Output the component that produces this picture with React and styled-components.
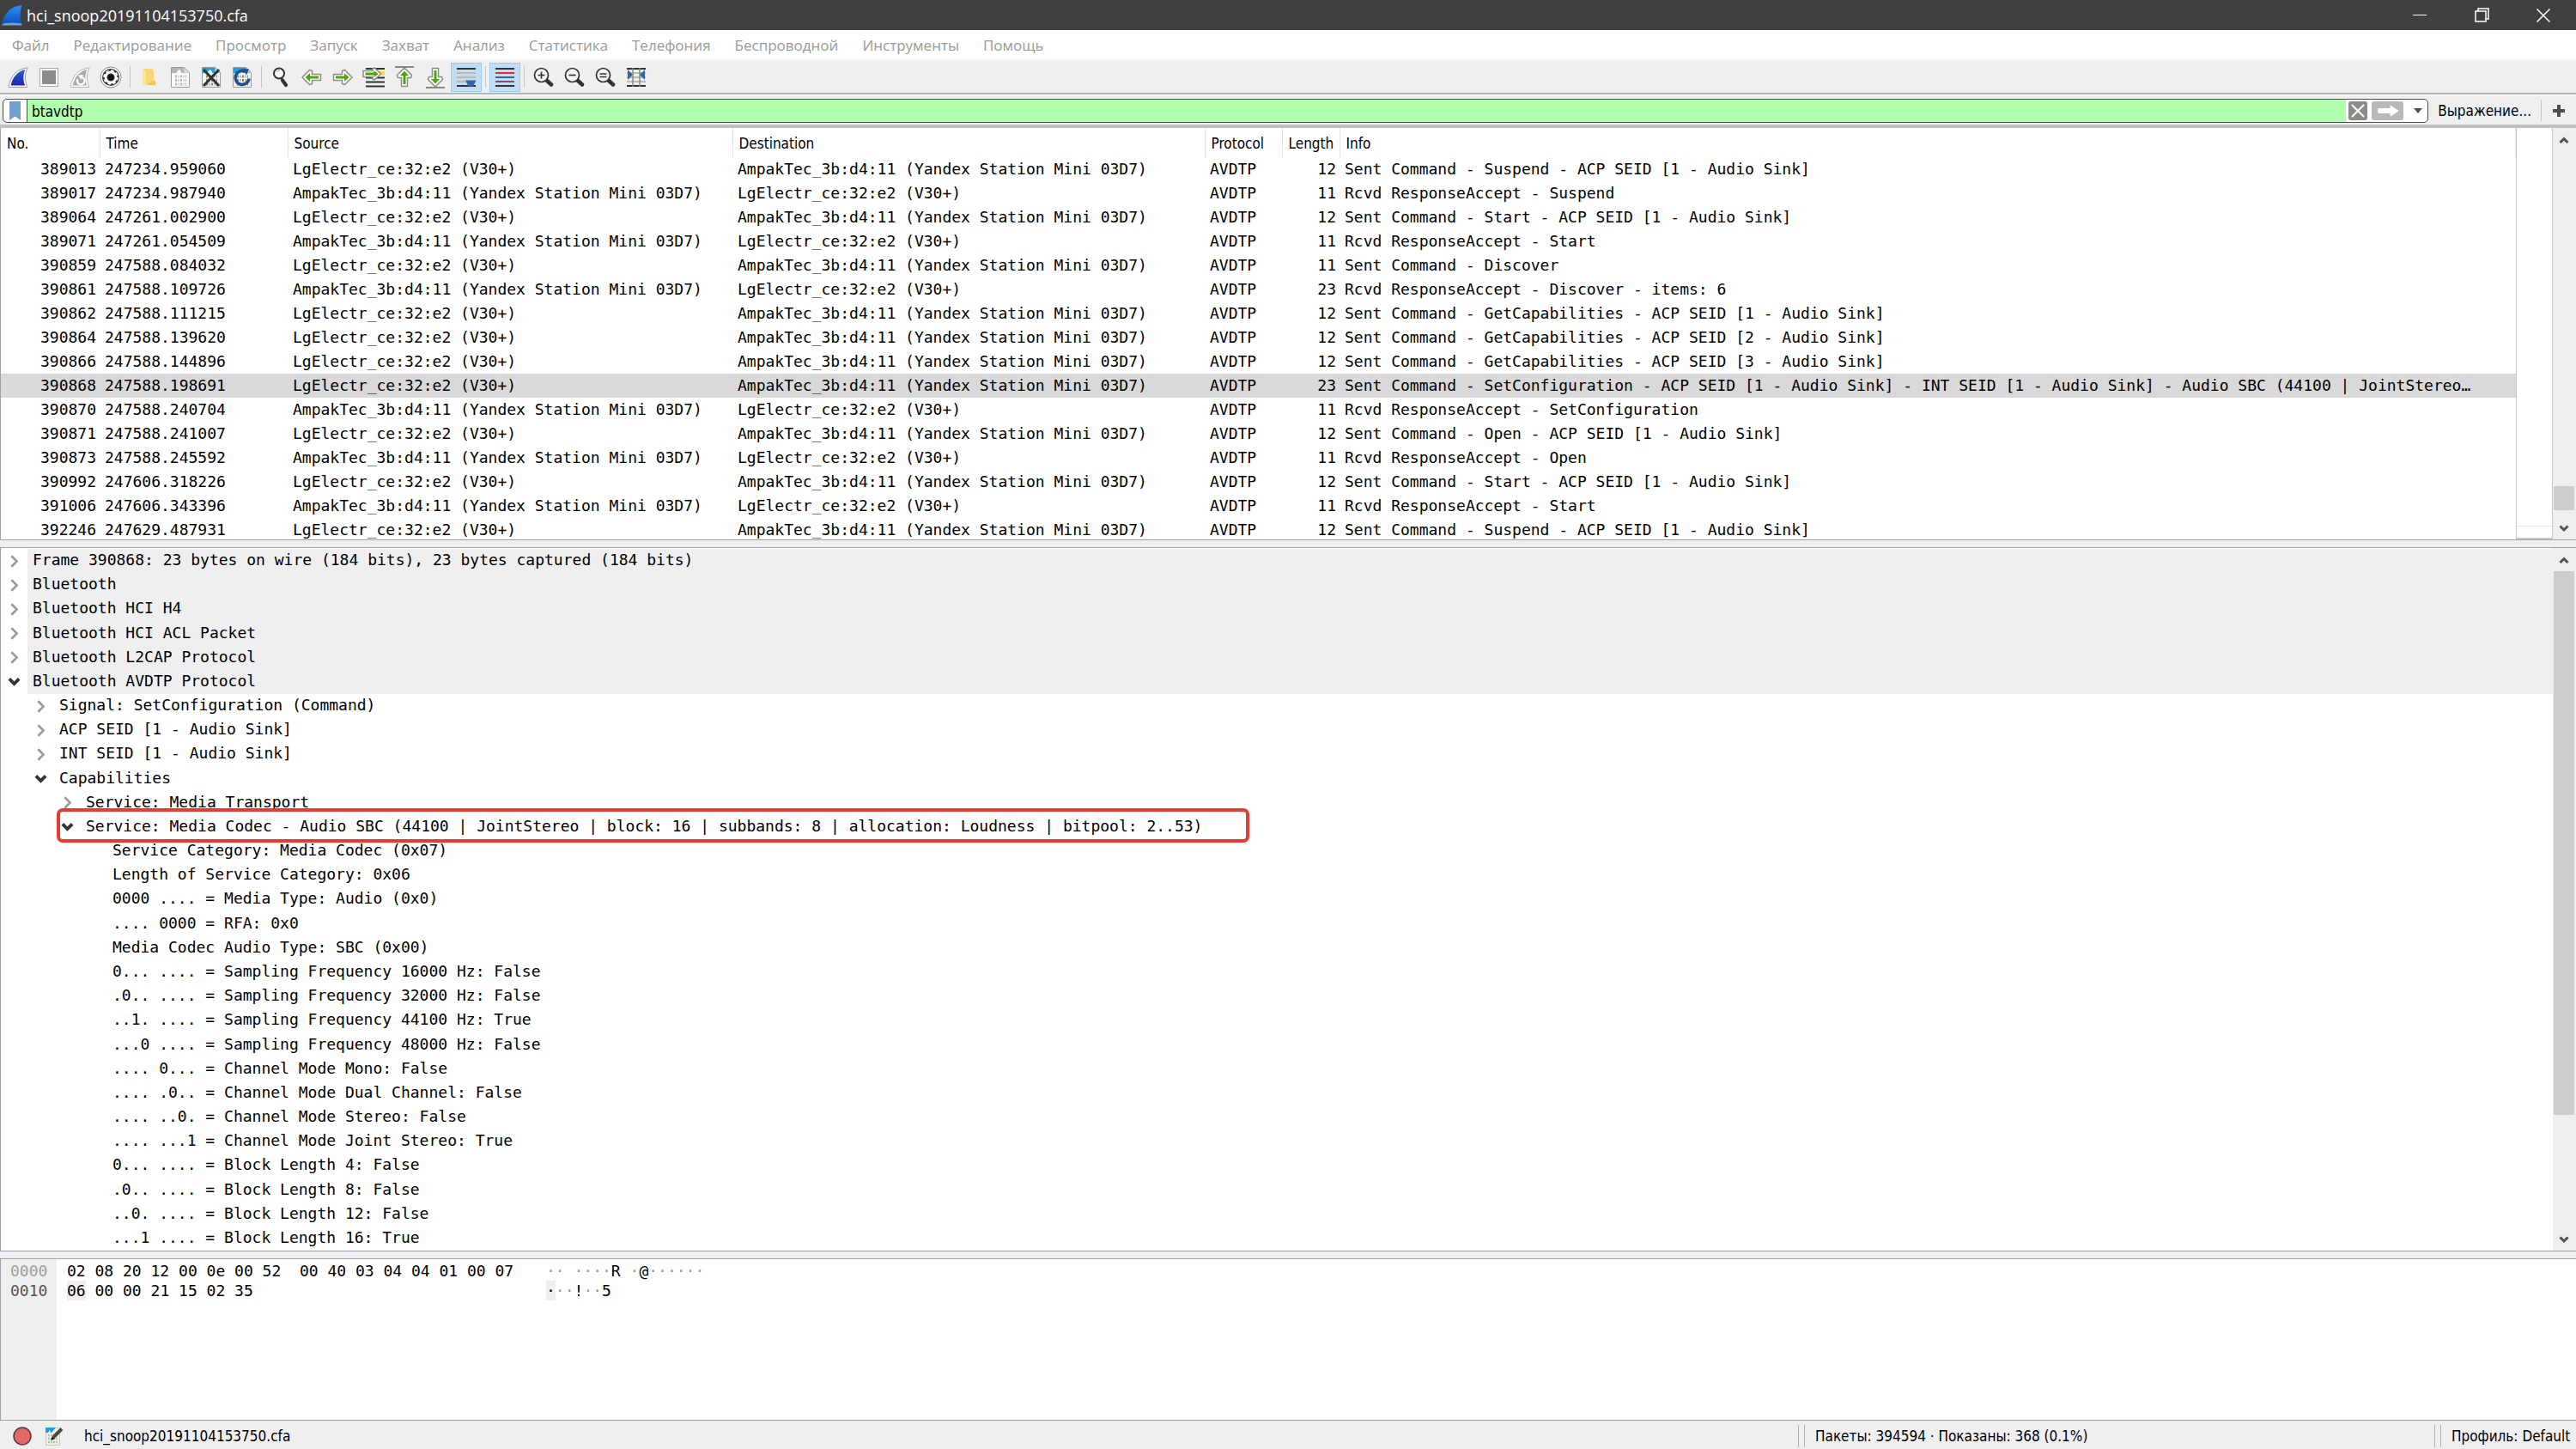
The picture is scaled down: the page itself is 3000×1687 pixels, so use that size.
import React from 'react'
import styled, { createGlobalStyle } from 'styled-components';

const Global = createGlobalStyle`
*{
  box-sizing: border-box;
}
body{
  margin: 0;
  background-color: #efefef;
  color: #000;
  font-family: "DejaVu Sans Condensed", "Open Sans", sans-serif;
  font-size: 17px;
}
button, input{
  font: inherit;
  color: inherit;
  border: 0;
  padding: 0;
  background: none;
}
`;
const mono = `"DejaVu Sans Mono", "Liberation Mono", monospace`;
const menuFont = `"Open Sans", "Noto Sans", sans-serif`;

const Window = styled.div`
display: flex;
flex-direction: column;
height: 100vh;
min-height: 1100px;
overflow: hidden;
`;
const TitleBar = styled.header`
display: flex;
align-items: center;
height: 35px;
flex: none;
padding: 0 2px;
background-color: #404040;
color: #fff;
`;
const TitleText = styled.h1`
flex: 1;
margin: 0 0 0 5px;
font-family: ${menuFont};
font-size: 18px;
font-weight: 400;
`;
const WindowButton = styled.button`
display: grid;
place-items: center;
width: 72px;
height: 35px;
`;
const MenuBar = styled.nav`
display: flex;
align-items: center;
height: 34px;
flex: none;
background-color: #fff;
`;
const MenuItem = styled.button`
padding: 0 14px;
height: 34px;
color: #999;
font-family: ${menuFont};
font-size: 17px;
`;
const ToolBar = styled.div`
display: flex;
align-items: center;
height: 41px;
flex: none;
padding-left: 3px;
border-top: 2px solid #f7f7f7;
border-bottom: 2px solid #b4b4b4;
`;
const ToolButton = styled.button`
display: grid;
place-items: center;
width: 36px;
height: 34px;
border: 1px solid ${props => props.$on ? "#99cdf2" : "transparent"};
background-color: ${props => props.$on ? "#c2dcf2" : "transparent"};
`;
const ToolLine = styled.span`
width: 1px;
height: 25px;
margin: 0 4px;
background-color: #c6c6c6;
`;
const FilterBar = styled.form`
display: flex;
align-items: center;
height: 39px;
flex: none;
padding: 1px 8px 0 3px;
border-top: 1px solid #fff;
border-bottom: 4px solid #c0c0c0;
`;
const FilterBox = styled.div`
display: flex;
align-items: center;
flex: 1;
height: 28px;
border: 1px solid #4d4d4d;
border-radius: 5px;
background-color: #fff;
overflow: hidden;
`;
const BookmarkButton = styled.button`
display: grid;
place-items: center;
width: 28px;
height: 26px;
border-right: 1px solid #4d4d4d;
`;
const FilterInput = styled.input`
flex: 1;
height: 26px;
padding: 2px 5px 0;
background-color: #afffaf;
outline: 0;
`;
const FilterButton = styled.button`
display: grid;
place-items: center;
width: ${props => props.$wide ? "37px" : "22px"};
height: 22px;
margin-left: ${props => props.$wide ? "5px" : "3px"};
border-radius: 3px;
background-color: ${props => props.$wide ? "#b9b9b9" : "#8a8c86"};
`;
const CaretButton = styled.button`
display: grid;
place-items: center;
width: 28px;
height: 26px;
padding-left: 6px;
`;
const ExpressionButton = styled.button`
margin-left: 11px;
padding-right: 7px;
height: 26px;
`;
const PlusButton = styled.button`
display: grid;
place-items: center;
width: 24px;
height: 26px;
margin-left: 4px;
`;
const Pane = styled.section`
display: flex;
flex: ${props => props.$height ? `none` : "1"};
height: ${props => props.$height || "auto"};
min-height: 0;
border: 1px solid #a0a0a8;
border-right: 0;
border-top-width: ${props => props.$first ? "0" : "1px"};
background-color: #fff;
`;
const Splitter = styled.div`
height: 8px;
flex: none;
`;
const PacketArea = styled.div`
flex: 1;
min-width: 0;
overflow: hidden;
`;
const PacketTable = styled.table`
width: 100%;
table-layout: fixed;
border-collapse: collapse;
`;
const HeadCell = styled.th`
height: 34px;
padding: 2px 7px 0;
border-right: 1px solid #e4e4e4;
text-align: left;
font-weight: 400;
`;
const Row = styled.tr`
height: 28px;
background-color: ${props => props.$selected ? "#d9d9d9" : "#fff"};
`;
const Cell = styled.td`
height: 28px;
padding: 0 4px 0 6px;
font-family: ${mono};
font-size: 18px;
line-height: 26px;
white-space: pre;
overflow: hidden;
text-overflow: ellipsis;
text-align: ${props => props.$right ? "right" : "left"};
`;
const MiniMap = styled.div`
width: 43px;
border: solid #c8c8c8;
border-width: 0 1px 2px;
padding-bottom: 13px;
`;
const MiniMapMark = styled.div`
height: 100%;
border-bottom: 1px solid #e6e6e6;
`;
const ScrollBar = styled.div`
display: flex;
flex-direction: column;
width: 27px;
padding: 0 2px 0 1px;
background-color: #efefef;
`;
const ScrollButton = styled.button`
display: grid;
place-items: center;
height: 27px;
flex: none;
`;
const ScrollSpace = styled.div`
flex: ${props => props.$size} 0 0;
`;
const Thumb = styled.div`
flex: ${props => props.$size} 0 0;
background-color: #cdcdcd;
`;
const Tree = styled.ul`
display: grid;
grid-auto-rows: 1fr;
flex: 1;
min-width: 0;
margin: 0;
padding: 1px 0 0;
list-style: none;
font-family: ${mono};
font-size: 18px;
overflow: hidden;
`;
const TreeItem = styled.li`
display: flex;
position: relative;
min-height: 0;
padding-left: ${props => props.$level * 31}px;
`;
const Toggle = styled.button`
display: grid;
place-items: center;
width: 31px;
`;
const TreeLabel = styled.span`
display: flex;
align-items: center;
flex: 1;
padding: 0 0 2px 6px;
margin-left: ${props => props.$leaf ? "31px" : "0"};
background-color: ${props => props.$shaded ? "#efefef" : "transparent"};
line-height: 24px;
white-space: pre;
`;
const Highlight = styled.span`
position: absolute;
left: 65px;
top: -8px;
bottom: -4px;
width: 1389px;
border: 4px solid #e63a32;
border-radius: 7px;
pointer-events: none;
`;
const Bytes = styled.div`
display: grid;
grid-template-columns: 65px 570px 1fr;
flex: 1;
font-family: ${mono};
font-size: 18px;
line-height: 23px;
`;
const ByteColumn = styled.div`
padding: 2px 0 0 ${props => props.$pad || "0"};
background-color: ${props => props.$offset ? "#efefef" : "#fff"};
`;
const ByteLine = styled.div`
height: 23px;
color: ${props => props.$color || "#000"};
white-space: pre;
`;
const Mark = styled.span`
display: inline-block;
height: 23px;
background-color: #efefef;
`;
const Dots = styled.span`
color: #999;
`;
const StatusBar = styled.footer`
display: flex;
align-items: center;
height: 33px;
flex: none;
padding: 2px 0 0 12px;
`;
const StatusButton = styled.button`
display: grid;
place-items: center;
width: 28px;
height: 28px;
margin-right: 9px;
`;
const StatusText = styled.span`
flex: ${props => props.$width ? "none" : "1"};
width: ${props => props.$width || "auto"};
padding-left: 12px;
white-space: nowrap;
`;
const Grip = styled.span`
width: 8px;
height: 26px;
border: solid #b0b0b0;
border-width: 0 1px;
`;

const dark = "#2e3436";

const Fin = ({ size = 24, top, bottom, rim }) => (
  <svg width={size} height={size} viewBox="0 0 24 24">
    <defs>
      <linearGradient id={"fin" + top.slice(1)} x1="0" y1="0" x2="0" y2="1">
        <stop offset="0" stopColor={top} />
        <stop offset="1" stopColor={bottom} />
      </linearGradient>
    </defs>
    {rim && <path d="M1 23.5C3 10 11 2 23.2.8 19.5 8 19.5 16 23 23.5z" fill="#fff" stroke="#9a9a9a" />}
    <path d={rim ? "M3.6 21.5C5.5 11.500 12 4.500 20.300 2.900 17.800 9 17.800 16 20.200 21.500z" : "M0 22.500C3 9 11 1 23.500 0 21 8 21 16 23.500 22.500 15 20.500 8 21 0 22.500z"} fill={`url(#fin${top.slice(1)})`} />
    {!rim && <path d="M0 23.500Q1.500 20.500 5 21 12 20 23.300 21.500L23.500 23.500z" fill="#7f9fd0" />}
  </svg>
)

const Page = ({ head = "#1f9fe0", body = "#f4f3ea", text = "#8c8c80", children }) => (
  <svg width="24" height="26" viewBox="0 0 24 26">
    <path d="M1.500 1.500h15l6 6v17h-21z" fill={body} stroke="#999" />
    <path d="M2 2h14.500l5 5v1H13c0-2-1-3-2-4-2 1-3 2.500-3.500 4H2z" fill={head} />
    <path d="M16.500 2v5.500h5.500z" fill="#ddd" />
    <g stroke={text} strokeWidth="3" strokeDasharray="2 1.500 1 1.500">
      <path d="M6 12h13M6 16.500h13M6 21h13" />
    </g>
    {children}
  </svg>
)

const Arrow = ({ turn = 0, children }) => (
  <svg width="26" height="26" viewBox="0 0 26 26">
    <g transform={`rotate(${turn} 13 13)`}>
      <path d="M2.500 9.500h10v-4l3-1 8.500 8.500-8.500 8.500-3-1v-4h-10z" fill="#fff" stroke="#8a8c86" strokeWidth="1.500" strokeLinejoin="round" />
      <path d="M5 11.500h10v-3.500l5.500 5-5.500 5v-3.500H5z" fill="#4ea60c" />
    </g>
    {children}
  </svg>
)

const Lens = ({ children }) => (
  <svg width="24" height="24" viewBox="0 0 24 24">
    <path d="M15 15l6 5.500" stroke={dark} strokeWidth="4.500" strokeLinecap="round" />
    <circle cx="9.500" cy="9.500" r="8" fill="#f4f4f4" stroke={dark} strokeWidth="1.700" />
    <g stroke={dark} strokeWidth="1.700">{children}</g>
  </svg>
)

const Lines = ({ colors, children }) => (
  <svg width="24" height="24" viewBox="0 0 24 24">
    {colors.map((c, i) => <path key={i} d={`M1 ${2 + i * 5}h22`} stroke={c} strokeWidth="2" />)}
    {children}
  </svg>
)

const Chevron = ({ d, color = "#505050", width = 3, size = 12 }) => (
  <svg width={size} height={size} viewBox="0 0 12 12">
    <path d={d} fill="none" stroke={color} strokeWidth={width} />
  </svg>
)
const up = "M1.500 9L6 4.500 10.500 9";
const down = "M1.500 3.500L6 8 10.500 3.500";
const right = "M3.500 1L8.500 6 3.500 11";

const tools = [
  { label: "Начать захват", icon: <Fin top="#2a5fd8" bottom="#2222a8" rim /> },
  { label: "Остановить захват", icon: <svg width="22" height="22" viewBox="0 0 22 22"><rect x=".5" y=".5" width="21" height="21" fill="#fff" stroke="#aaa" /><rect x="3" y="3" width="16" height="16" fill="#8b8b8b" /></svg> },
  {
    label: "Перезапустить захват", icon: <svg width="24" height="24" viewBox="0 0 24 24">
      <path d="M1 23.500C3 10 11 2 23.200.8 19.500 8 19.500 16 23 23.500z" fill="#fff" stroke="#b4b4b4" />
      <path d="M3.600 21.500C5.500 11.500 12 4.500 20.300 2.900 17.800 9 17.800 16 20.200 21.500z" fill="#aaa" />
      <path d="M9.500 14a4.300 4.300 0 1 0 5-2" fill="none" stroke="#fff" strokeWidth="2.200" /><path d="M10 9.500l6-.5-2.500 6z" fill="#fff" />
    </svg>
  },
  {
    label: "Параметры захвата", icon: <svg width="26" height="26" viewBox="0 0 26 26">
      <circle cx="13" cy="13" r="12" fill="#fff" stroke="#8a8c86" /><circle cx="13" cy="13" r="10" fill={dark} />
      <circle cx="13" cy="13" r="6" fill="none" stroke="#fff" strokeWidth="3" />
      <circle cx="13" cy="13" r="7.500" fill="none" stroke="#fff" strokeWidth="2.500" strokeDasharray="3.300 2.590" /><circle cx="13" cy="13" r="3.500" fill="#111" />
    </svg>
  },
  null,
  { label: "Открыть", icon: <svg width="18" height="22" viewBox="0 0 18 22"><path d="M2 1h10l2 2v12l2 4H3z" fill="#f7d774" /><path d="M1 1l4 2.500V21L1 18.500z" fill="#fbe49b" /><path d="M5 20h11v-5h-2z" fill="#efc55c" /></svg> },
  { label: "Сохранить", icon: <Page head="#b5b5b5" body="#fafafa" text="#b8b8b8" /> },
  { label: "Закрыть", icon: <Page><path d="M3 4l18 19M21 4L3 23" stroke={dark} strokeWidth="3" /></Page> },
  { label: "Обновить", icon: <Page><path d="M15.500 6.200A8 8 0 1 0 20 14.500" fill="none" stroke="#204f94" strokeWidth="3.600" /><path d="M13 3l7 .5-3 7z" fill="#204f94" /></Page> },
  null,
  { label: "Найти", icon: <svg width="20" height="24" viewBox="0 0 20 24"><circle cx="8" cy="7.500" r="6" fill="#fafafa" stroke={dark} strokeWidth="2" /><path d="M10.500 13.500l2 1.500" stroke={dark} strokeWidth="2" /><path d="M12 15.500l4 5.500" stroke={dark} strokeWidth="4.200" strokeLinecap="round" /><path d="M5 6q1-2.500 4-2" fill="none" stroke="#999" /></svg> },
  { label: "Назад", icon: <Arrow turn={180} /> },
  { label: "Вперёд", icon: <Arrow /> },
  {
    label: "К пакету", icon: <svg width="26" height="24" viewBox="0 0 26 24">
      <path d="M4 2h22M4 12.500h22M4 17.500h22M4 22.500h22" stroke={dark} strokeWidth="2" /><path d="M17 7h9" stroke="#ffd83a" strokeWidth="5" />
      <path d="M1 4.500h11V2l2-1 7.500 7-7.500 7-2-1v-2.500H1z" fill="#fff" stroke="#8a8c86" strokeWidth="1.500" /><path d="M3.500 6.500h10V4l5 4-5 4V9.500h-10z" fill="#4ea60c" />
    </svg>
  },
  { label: "К первому", icon: <Arrow turn={-90}><path d="M2 1h22" stroke="#666" strokeWidth="1.500" /></Arrow> },
  { label: "К последнему", icon: <Arrow turn={90}><path d="M2 25h22" stroke="#666" strokeWidth="1.500" /></Arrow> },
  { label: "Автопрокрутка", on: true, icon: <Lines colors={[dark, "#babab0", "#babab0", "#babab0", dark]}><path d="M11 15.500h12.500l-3.500 7h-5.500z" fill="#3465a4" /></Lines> },
  null,
  { label: "Раскрасить", on: true, icon: <Lines colors={[dark, "#ef2929", "#3465a4", "#75507b", dark]} /> },
  null,
  { label: "Увеличить", icon: <Lens><path d="M9.500 5.500v8M5.500 9.500h8" /></Lens> },
  { label: "Уменьшить", icon: <Lens><path d="M5.500 9.500h8" /></Lens> },
  { label: "Обычный размер", icon: <Lens><path d="M5.500 8h8M5.500 11.500h8" /></Lens> },
  { label: "Подогнать столбцы", icon: <Lines colors={[dark, "#babab0", "#babab0", "#babab0", dark]}><path d="M8 1v22M16 1v22" stroke="#888a85" strokeWidth="1.500" /><path d="M2 3l6 6-6 6zM22 3l-6 6 6 6z" fill="#3465a4" /></Lines> },
];

const menus = ["Файл", "Редактирование", "Просмотр", "Запуск", "Захват", "Анализ", "Статистика", "Телефония", "Беспроводной", "Инструменты", "Помощь"];

const columns = [["No.", 115], ["Time", 219], ["Source", 518], ["Destination", 550], ["Protocol", 90], ["Length", 67], ["Info"]];
const lg = "LgElectr_ce:32:e2 (V30+)";
const yandex = "AmpakTec_3b:d4:11 (Yandex Station Mini 03D7)";
const packets = [
  ["389013", "247234.959060", 12, "Sent Command - Suspend - ACP SEID [1 - Audio Sink]"],
  ["389017", "247234.987940", 11, "Rcvd ResponseAccept - Suspend"],
  ["389064", "247261.002900", 12, "Sent Command - Start - ACP SEID [1 - Audio Sink]"],
  ["389071", "247261.054509", 11, "Rcvd ResponseAccept - Start"],
  ["390859", "247588.084032", 11, "Sent Command - Discover"],
  ["390861", "247588.109726", 23, "Rcvd ResponseAccept - Discover - items: 6"],
  ["390862", "247588.111215", 12, "Sent Command - GetCapabilities - ACP SEID [1 - Audio Sink]"],
  ["390864", "247588.139620", 12, "Sent Command - GetCapabilities - ACP SEID [2 - Audio Sink]"],
  ["390866", "247588.144896", 12, "Sent Command - GetCapabilities - ACP SEID [3 - Audio Sink]"],
  ["390868", "247588.198691", 23, "Sent Command - SetConfiguration - ACP SEID [1 - Audio Sink] - INT SEID [1 - Audio Sink] - Audio SBC (44100 | JointStereo…"],
  ["390870", "247588.240704", 11, "Rcvd ResponseAccept - SetConfiguration"],
  ["390871", "247588.241007", 12, "Sent Command - Open - ACP SEID [1 - Audio Sink]"],
  ["390873", "247588.245592", 11, "Rcvd ResponseAccept - Open"],
  ["390992", "247606.318226", 12, "Sent Command - Start - ACP SEID [1 - Audio Sink]"],
  ["391006", "247606.343396", 11, "Rcvd ResponseAccept - Start"],
  ["392246", "247629.487931", 12, "Sent Command - Suspend - ACP SEID [1 - Audio Sink]"],
];

// level, state (closed / open / leaf), text
const details = [
  [0, "closed", "Frame 390868: 23 bytes on wire (184 bits), 23 bytes captured (184 bits)"],
  [0, "closed", "Bluetooth"],
  [0, "closed", "Bluetooth HCI H4"],
  [0, "closed", "Bluetooth HCI ACL Packet"],
  [0, "closed", "Bluetooth L2CAP Protocol"],
  [0, "open", "Bluetooth AVDTP Protocol"],
  [1, "closed", "Signal: SetConfiguration (Command)"],
  [1, "closed", "ACP SEID [1 - Audio Sink]"],
  [1, "closed", "INT SEID [1 - Audio Sink]"],
  [1, "open", "Capabilities"],
  [2, "closed", "Service: Media Transport"],
  [2, "open", "Service: Media Codec - Audio SBC (44100 | JointStereo | block: 16 | subbands: 8 | allocation: Loudness | bitpool: 2..53)", true],
  [3, "leaf", "Service Category: Media Codec (0x07)"],
  [3, "leaf", "Length of Service Category: 0x06"],
  [3, "leaf", "0000 .... = Media Type: Audio (0x0)"],
  [3, "leaf", ".... 0000 = RFA: 0x0"],
  [3, "leaf", "Media Codec Audio Type: SBC (0x00)"],
  [3, "leaf", "0... .... = Sampling Frequency 16000 Hz: False"],
  [3, "leaf", ".0.. .... = Sampling Frequency 32000 Hz: False"],
  [3, "leaf", "..1. .... = Sampling Frequency 44100 Hz: True"],
  [3, "leaf", "...0 .... = Sampling Frequency 48000 Hz: False"],
  [3, "leaf", ".... 0... = Channel Mode Mono: False"],
  [3, "leaf", ".... .0.. = Channel Mode Dual Channel: False"],
  [3, "leaf", ".... ..0. = Channel Mode Stereo: False"],
  [3, "leaf", ".... ...1 = Channel Mode Joint Stereo: True"],
  [3, "leaf", "0... .... = Block Length 4: False"],
  [3, "leaf", ".0.. .... = Block Length 8: False"],
  [3, "leaf", "..0. .... = Block Length 12: False"],
  [3, "leaf", "...1 .... = Block Length 16: True"],
];

const Scroller = ({ before, thumb, after }) => (
  <ScrollBar>
    <ScrollButton aria-label="Вверх"><Chevron d={up} /></ScrollButton>
    <ScrollSpace $size={before} />
    <Thumb $size={thumb} />
    <ScrollSpace $size={after} />
    <ScrollButton aria-label="Вниз"><Chevron d={down} /></ScrollButton>
  </ScrollBar>
)

const App = () => {
  return (
    <>
      <Global />
      <Window>
        <TitleBar>
          <Fin top="#2f8fee" bottom="#0a4fc0" />
          <TitleText>hci_snoop20191104153750.cfa</TitleText>
          <WindowButton aria-label="Свернуть"><svg width="16" height="16"><path d="M0 7.500h16" stroke="#fff" strokeWidth="1" /></svg></WindowButton>
          <WindowButton aria-label="Восстановить"><svg width="17" height="17" fill="none" stroke="#fff" strokeWidth="1.500"><path d="M1 4h12v12H1zM4 4V1h12v12h-3" /></svg></WindowButton>
          <WindowButton aria-label="Закрыть окно"><svg width="16" height="16"><path d="M.5.5l15 15M15.500.5l-15 15" stroke="#fff" strokeWidth="1.500" /></svg></WindowButton>
        </TitleBar>
        <MenuBar>
          {menus.map(m => <MenuItem key={m}>{m}</MenuItem>)}
        </MenuBar>
        <ToolBar>
          {tools.map((t, i) => t
            ? <ToolButton key={i} $on={t.on} aria-label={t.label}>{t.icon}</ToolButton>
            : <ToolLine key={i} />)}
        </ToolBar>
        <FilterBar onSubmit={e => e.preventDefault()}>
          <FilterBox>
            <BookmarkButton type="button" aria-label="Закладки"><svg width="13" height="22"><path d="M0 0h13v22l-6.500-4.500L0 22z" fill="#729fcf" /></svg></BookmarkButton>
            <FilterInput aria-label="Фильтр отображения" defaultValue="btavdtp" />
            <FilterButton type="button" aria-label="Очистить"><svg width="16" height="16"><path d="M1.500 1.500l13 13M14.500 1.500l-13 13" stroke="#fff" strokeWidth="2" strokeLinecap="round" /></svg></FilterButton>
            <FilterButton $wide aria-label="Применить"><svg width="26" height="14"><path d="M2 4.500h14V1l9 6-9 6V9.500H2q-1-2.500 0-5z" fill="#fff" stroke="#fff" strokeLinejoin="round" /></svg></FilterButton>
            <CaretButton type="button" aria-label="История"><svg width="10" height="6"><path d="M0 0h10L5 6z" fill="#505050" /></svg></CaretButton>
          </FilterBox>
          <ExpressionButton type="button">Выражение...</ExpressionButton>
          <ToolLine />
          <PlusButton type="button" aria-label="Добавить"><svg width="14" height="14"><path d="M7 0v14M0 7h14" stroke="#4d4d4d" strokeWidth="4" /></svg></PlusButton>
        </FilterBar>
        <Pane $first $height="480px">
          <PacketArea>
            <PacketTable>
              <colgroup>
                {columns.map(([name, width]) => <col key={name} width={width} />)}
              </colgroup>
              <thead>
                <tr>{columns.map(([name]) => <HeadCell key={name}>{name}</HeadCell>)}</tr>
              </thead>
              <tbody>
                {packets.map(([no, time, length, info]) => {
                  const fromPhone = info.startsWith("Sent");
                  return (
                    <Row key={no} $selected={no === "390868"}>
                      <Cell $right>{no}</Cell>
                      <Cell>{time}</Cell>
                      <Cell>{fromPhone ? lg : yandex}</Cell>
                      <Cell>{fromPhone ? yandex : lg}</Cell>
                      <Cell>AVDTP</Cell>
                      <Cell $right>{length}</Cell>
                      <Cell>{info}</Cell>
                    </Row>
                  )
                })}
              </tbody>
            </PacketTable>
          </PacketArea>
          <MiniMap><MiniMapMark /></MiniMap>
          <Scroller before={390} thumb={28} after={7} />
        </Pane>
        <Splitter />
        <Pane>
          <Tree>
            {details.map(([level, state, text, boxed]) => (
              <TreeItem key={text} $level={level}>
                {state !== "leaf" && (
                  <Toggle aria-label={text} aria-expanded={state === "open"}>
                    {state === "open" ? <Chevron d={down} color="#333" size={15} /> : <Chevron d={right} color="#999" width={2} size={15} />}
                  </Toggle>
                )}
                <TreeLabel $shaded={level === 0} $leaf={state === "leaf"}>{text}</TreeLabel>
                {boxed && <Highlight />}
              </TreeItem>
            ))}
          </Tree>
          <Scroller before={0} thumb={633} after={131} />
        </Pane>
        <Splitter />
        <Pane $height="189px">
          <Bytes>
            <ByteColumn $offset $pad="11px">
              <ByteLine $color="#a0a0a0">0000</ByteLine>
              <ByteLine $color="#555">0010</ByteLine>
            </ByteColumn>
            <ByteColumn $pad="12px">
              <ByteLine>02 08 20 12 00 0e 00 52  00 40 03 04 04 01 00 07</ByteLine>
              <ByteLine><Mark>06</Mark> 00 00 21 15 02 35</ByteLine>
            </ByteColumn>
            <ByteColumn>
              <ByteLine><Dots>·· ····</Dots>R <Dots>·</Dots>@<Dots>······</Dots></ByteLine>
              <ByteLine><Mark>·</Mark><Dots>··</Dots>!<Dots>··</Dots>5</ByteLine>
            </ByteColumn>
          </Bytes>
        </Pane>
        <StatusBar>
          <StatusButton aria-label="Экспертная информация"><svg width="22" height="22"><circle cx="11" cy="11" r="10" fill="#e46a6a" stroke="#5a3a3a" strokeWidth="1.500" /></svg></StatusButton>
          <StatusButton aria-label="Комментарий к файлу">
            <svg width="24" height="24" viewBox="0 0 24 24">
              <path d="M2.500 2.500h16v20h-16z" fill="#f1f0e6" stroke="#c8c8c0" /><path d="M2 2h12l-5 6H8L7 5 5 8H2z" fill="#1f9fe0" />
              <path d="M5 11h11M5 15h11M5 19h11" stroke="#c0bfb2" strokeWidth="2.500" strokeDasharray="2 1" />
              <path d="M8 17l2-5 3 3z" fill="#111" /><path d="M11 13.500L21 3.500" stroke="#4a4a4a" strokeWidth="4" />
            </svg>
          </StatusButton>
          <StatusText>hci_snoop20191104153750.cfa</StatusText>
          <Grip />
          <StatusText $width="733px">Пакеты: 394594 · Показаны: 368 (0.1%)</StatusText>
          <Grip />
          <StatusText $width="157px">Профиль: Default</StatusText>
        </StatusBar>
      </Window>
    </>
  )
}

export default App
